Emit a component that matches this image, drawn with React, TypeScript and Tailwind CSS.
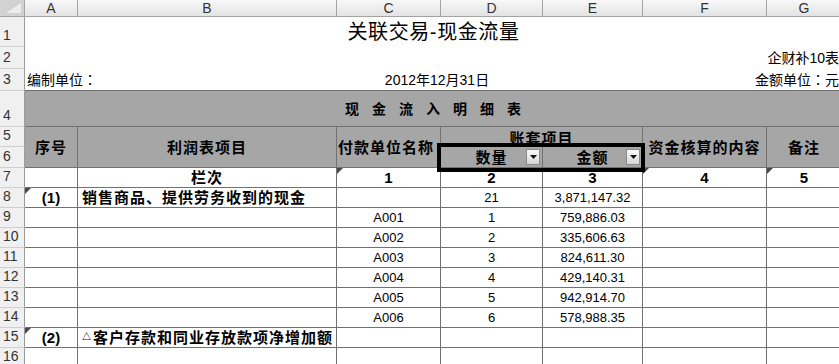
import React from 'react';

const grid = 'border-r border-b border-[#717171]';

function Mark() {
  return (
    <svg className="absolute left-0 top-0" width="6" height="6" viewBox="0 0 6 6" aria-hidden="true">
      <polygon points="0,0 6,0 0,6" fill="#4a4a4a" />
    </svg>
  );
}

function DropButton() {
  return (
    <div className="absolute right-[2px] top-[2px] flex h-[16px] w-[14px] items-center justify-center border border-[#8a8a8a] bg-gradient-to-b from-[#fafafa] to-[#d6d6d6]">
      <svg width="7" height="4" viewBox="0 0 7 4" aria-hidden="true">
        <polygon points="0,0 7,0 3.5,4" fill="#111" />
      </svg>
    </div>
  );
}

function RowNum({ n }: { n: number }) {
  return (
    <div className="flex items-end border-r border-b border-r-[#9b9b9b] border-b-[#cfcfcf] bg-[#f0f0f0] pb-[4px] pl-[3px] text-[14px] leading-none text-[#333]">
      {n}
    </div>
  );
}

function ColHead({ label }: { label: string }) {
  return (
    <div className="flex items-center justify-center border-r border-b border-[#a3a3a3] bg-gradient-to-b from-[#f8f8f8] to-[#e3e3e3] text-[14px] leading-none text-[#333]">
      {label}
    </div>
  );
}

// full-width colon, centred in its box as in the sheet
function Colon() {
  return <span className="font-['Noto_Sans_CJK_TC',sans-serif]">：</span>;
}

const rows = [
  { id: 'A001', qty: '1', amount: '759,886.03' },
  { id: 'A002', qty: '2', amount: '335,606.63' },
  { id: 'A003', qty: '3', amount: '824,611.30' },
  { id: 'A004', qty: '4', amount: '429,140.31' },
  { id: 'A005', qty: '5', amount: '942,914.70' },
  { id: 'A006', qty: '6', amount: '578,988.35' },
];

export default function App() {
  return (
    <div className="relative h-[364px] w-[839px] overflow-hidden bg-white font-['Liberation_Sans','Noto_Sans_CJK_SC',sans-serif] text-black">
      <div className="grid w-[842px] grid-cols-[25px_53px_259px_104px_102px_100px_124px_75px] grid-rows-[17px_30px_22px_22px_36px_20px_21px_20px_20px_20px_20px_20px_20px_20px_20px_20px_20px]">
        {/* column headers */}
        <div className="relative border-r border-b border-[#a3a3a3] bg-[#d2d2d2]">
          <svg className="absolute inset-0" width="24" height="16" viewBox="0 0 24 16" aria-hidden="true">
            <polygon points="21,3 21,13 6,13" fill="#ececec" />
          </svg>
        </div>
        {['A', 'B', 'C', 'D', 'E', 'F', 'G'].map((c) => (
          <ColHead key={c} label={c} />
        ))}

        {/* row 1 */}
        <RowNum n={1} />
        <div className="col-span-7 flex items-end justify-center pb-[5px] text-[20px] leading-none tracking-[0.6px]">
          关联交易-现金流量
        </div>

        {/* row 2 */}
        <RowNum n={2} />
        <div className="col-span-7 flex items-center justify-end pr-[3px] text-[14px] leading-none">
          企财补10表
        </div>

        {/* row 3 */}
        <RowNum n={3} />
        <div className="col-span-7 flex items-center justify-between border-b border-[#717171] pl-[2px] pr-[3px] text-[14px] leading-none">
          <span className="w-[200px]">
            编制单位<Colon />
          </span>
          <span className="pl-[8px]">2012年12月31日</span>
          <span className="w-[200px] text-right">
            金额单位<Colon />元
          </span>
        </div>

        {/* row 4 */}
        <RowNum n={4} />
        <div className={`col-span-7 flex items-center justify-center gap-[13px] bg-[#a6a6a6] text-[14px] font-bold leading-none ${grid}`}>
          {['现', '金', '流', '入', '明', '细', '表'].map((ch) => (
            <span key={ch}>{ch}</span>
          ))}
        </div>

        {/* rows 5-6 */}
        <RowNum n={5} />
        <div className={`row-span-2 flex items-center justify-center bg-[#a6a6a6] text-[15px] font-bold leading-none tracking-[1px] ${grid}`}>
          序号
        </div>
        <div className={`row-span-2 flex items-center justify-center bg-[#a6a6a6] text-[15px] font-bold leading-none tracking-[1px] ${grid}`}>
          利润表项目
        </div>
        <div className={`row-span-2 flex items-center overflow-hidden whitespace-nowrap bg-[#a6a6a6] pl-[1px] text-[15px] font-bold leading-none tracking-[1px] ${grid}`}>
          付款单位名称
        </div>
        <div className={`col-span-2 flex items-end justify-center bg-[#a6a6a6] text-[15px] font-bold leading-none tracking-[1px] ${grid}`}>
          账套项目
        </div>
        <div className={`row-span-2 flex items-center justify-center bg-[#a6a6a6] text-[15px] font-bold leading-none tracking-[1px] ${grid}`}>
          资金核算的内容
        </div>
        <div className={`row-span-2 flex items-center justify-center bg-[#a6a6a6] text-[15px] font-bold leading-none tracking-[1px] ${grid}`}>
          备注
        </div>
        <RowNum n={6} />
        <div className={`relative flex items-center justify-center bg-[#a6a6a6] text-[15px] font-bold leading-none tracking-[1px] ${grid}`}>
          数量
          <DropButton />
        </div>
        <div className={`relative flex items-center justify-center bg-[#a6a6a6] text-[15px] font-bold leading-none tracking-[1px] ${grid}`}>
          金额
          <DropButton />
        </div>

        {/* row 7 */}
        <RowNum n={7} />
        <div className={grid} />
        <div className={`flex items-center justify-center text-[15px] font-bold leading-none tracking-[1px] ${grid}`}>栏次</div>
        <div className={`relative flex items-center justify-center text-[15px] font-bold leading-none ${grid}`}>
          <Mark />1
        </div>
        <div className={`flex items-center justify-center text-[15px] font-bold leading-none ${grid}`}>2</div>
        <div className={`flex items-center justify-center text-[15px] font-bold leading-none ${grid}`}>3</div>
        <div className={`relative flex items-center justify-center text-[15px] font-bold leading-none ${grid}`}>
          <Mark />4
        </div>
        <div className={`relative flex items-center justify-center text-[15px] font-bold leading-none ${grid}`}>
          <Mark />5
        </div>

        {/* row 8 */}
        <RowNum n={8} />
        <div className={`relative flex items-center justify-center text-[15px] font-bold leading-none ${grid}`}>
          <Mark />(1)
        </div>
        <div className={`flex items-center whitespace-nowrap pl-[4px] text-[15px] font-bold leading-none tracking-[1px] ${grid}`}>
          销售商品、提供劳务收到的现金
        </div>
        <div className={grid} />
        <div className={`flex items-center justify-center text-[13px] leading-none ${grid}`}>21</div>
        <div className={`flex items-center justify-center text-[13px] leading-none ${grid}`}>3,871,147.32</div>
        <div className={grid} />
        <div className={grid} />

        {/* rows 9-14 */}
        {rows.map((r, i) => (
          <React.Fragment key={r.id}>
            <RowNum n={9 + i} />
            <div className={grid} />
            <div className={grid} />
            <div className={`flex items-center justify-center text-[13px] leading-none ${grid}`}>{r.id}</div>
            <div className={`flex items-center justify-center text-[13px] leading-none ${grid}`}>{r.qty}</div>
            <div className={`flex items-center justify-center text-[13px] leading-none ${grid}`}>{r.amount}</div>
            <div className={grid} />
            <div className={grid} />
          </React.Fragment>
        ))}

        {/* row 15 */}
        <RowNum n={15} />
        <div className={`relative flex items-center justify-center text-[15px] font-bold leading-none ${grid}`}>
          <Mark />(2)
        </div>
        <div className={`flex items-center whitespace-nowrap pl-[4px] text-[15px] font-bold leading-none tracking-[1px] ${grid}`}>
          <span className="mr-[1px] text-[9px] text-black">△</span>客户存款和同业存放款项净增加额
        </div>
        <div className={grid} />
        <div className={grid} />
        <div className={grid} />
        <div className={grid} />
        <div className={grid} />

        {/* row 16 */}
        <RowNum n={16} />
        {[0, 1, 2, 3, 4, 5, 6].map((k) => (
          <div key={k} className={grid} />
        ))}
      </div>

      {/* selection frame over D6:E6 */}
      <div className="pointer-events-none absolute left-[437px] top-[143px] h-[29px] w-[208px] border-[4px] border-black" />
    </div>
  );
}
